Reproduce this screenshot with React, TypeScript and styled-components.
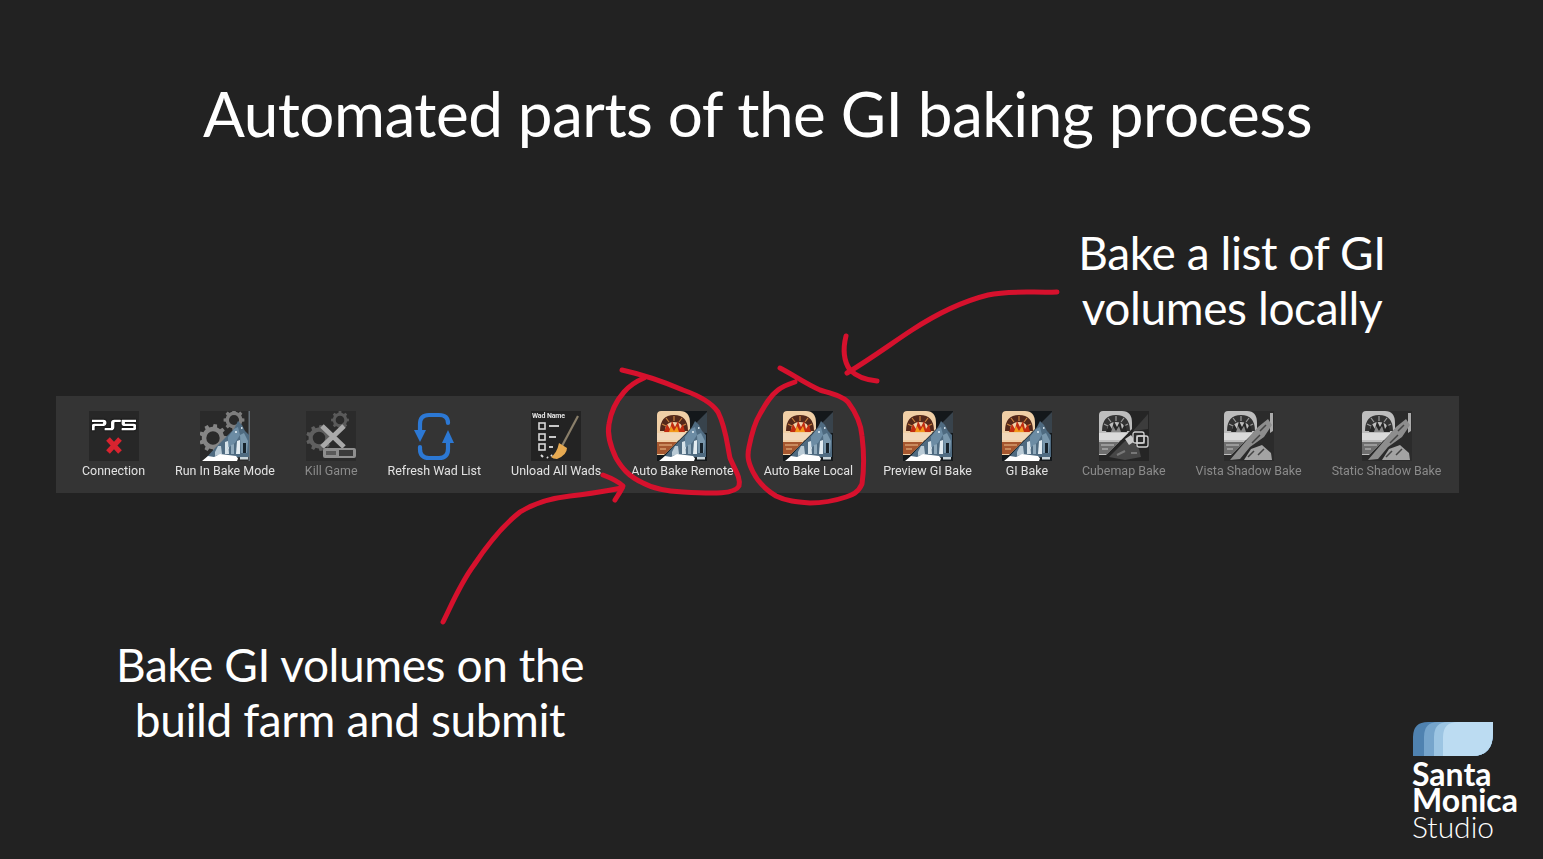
import React from "react";
import styled, { createGlobalStyle } from "styled-components";
import { SiPlaystation5 } from "react-icons/si";

const Global = createGlobalStyle`
  html, body { margin: 0; padding: 0; background: #222222; }
  #root { width: 1543px; height: 859px; overflow: hidden; }
`;

const Slide = styled.main`
  position: relative;
  width: 1543px;
  height: 859px;
  overflow: hidden;
  background: #222222;
  color: #ffffff;
  font-family: Lato, "Liberation Sans", sans-serif;
  display: flex;
  flex-direction: column;
`;

const Title = styled.h1`
  margin: 74px 0 0 0;
  height: 78px;
  padding-right: 28px;
  text-align: center;
  font-size: 62px;
  line-height: 78px;
  font-weight: 400;
  letter-spacing: -0.5px;
  white-space: nowrap;
`;

const Callout = styled.p<{ $width: number }>`
  margin: 0;
  width: ${(p) => p.$width}px;
  text-align: center;
  font-size: 46px;
  line-height: 55px;
  font-weight: 400;
  letter-spacing: -0.4px;
`;

const UpperRow = styled.section`
  display: flex;
  justify-content: flex-end;
  padding: 73px 151px 0 0;
  height: 244px;
  box-sizing: border-box;
`;

const Toolbar = styled.nav`
  margin: 0 0 0 56px;
  width: 1403px;
  height: 97px;
  box-sizing: border-box;
  background: #343434;
  display: flex;
  gap: 30px;
  padding: 15px 0 0 26px;
  font-family: Roboto, "Liberation Sans", sans-serif;
`;

const Tool = styled.div<{ $dim?: boolean }>`
  display: flex;
  flex-direction: column;
  align-items: center;
  gap: 2px;
  color: ${(p) => (p.$dim ? "#8b8b8b" : "#e2e2e2")};
  font-size: 12.45px;
  line-height: 16px;
  white-space: nowrap;
  filter: blur(0.4px);
`;

const IconBox = styled.div`
  width: 50px;
  height: 50px;
  flex: none;
  filter: blur(0.35px);
  svg { display: block; }
`;

const PsTile = styled.div`
  width: 50px;
  height: 50px;
  background: #272727;
  display: flex;
  flex-direction: column;
  align-items: center;
  color: #ffffff;
  svg.logo {
    margin: -8px 0 -10px;
    stroke: #ffffff;
    stroke-width: 0.7px;
    filter: drop-shadow(0 0 1px #000);
  }
`;

const LowerRow = styled.section`
  display: flex;
  justify-content: space-between;
  align-items: flex-start;
  padding: 144px 26px 0 100px;
`;

const Brand = styled.div`
  margin-top: 84px;
  width: 105px;
  display: flex;
  flex-direction: column;
  align-items: flex-start;
`;

const BrandLine = styled.span<{ $light?: boolean }>`
  font-family: Lato, "Liberation Sans", sans-serif;
  font-size: ${(p) => (p.$light ? 30 : 32)}px;
  height: 26px;
  line-height: 26px;
  font-weight: ${(p) => (p.$light ? 300 : 700)};
  letter-spacing: 0;
  color: #ffffff;
  white-space: nowrap;
`;

const BrandMark = styled.svg`
  display: block;
  margin-bottom: 4px;
  filter: blur(0.3px);
`;

const InkLayer = styled.svg`
  position: absolute;
  inset: 0;
  pointer-events: none;
`;

const Ink = styled.path`
  fill: none;
  stroke: #d6112d;
  stroke-width: 5;
  stroke-linecap: round;
  stroke-linejoin: round;
`;

function gearPath(cx: number, cy: number, r: number, teeth = 8) {
  const pts: string[] = [];
  const step = (Math.PI * 2) / teeth;
  for (let i = 0; i < teeth; i++) {
    const a = i * step;
    const at = (rad: number, off: number) =>
      `${(cx + rad * Math.cos(a + off * step)).toFixed(1)} ${(cy + rad * Math.sin(a + off * step)).toFixed(1)}`;
    pts.push(at(r * 0.8, -0.5), at(r * 0.8, -0.28), at(r, -0.18), at(r, 0.18), at(r * 0.8, 0.28));
  }
  const hole = r * 0.48;
  return `M${pts.join(" L")} Z M${cx - hole} ${cy} a${hole} ${hole} 0 1 0 ${hole * 2} 0 a${hole} ${hole} 0 1 0 ${-hole * 2} 0 Z`;
}

const Snow = () => (
  <>
    <path d="M6 47 L16 36 L26 26 L34 18 L38 10 L42 14 L45 20 L49 24 L49 46 Z" fill="#4f6b81" />
    <path d="M28 26 L34 18 L38 16 L40 24 L35 32 L28 37 Z" fill="#6c8ca4" />
    <path d="M40 24 L44 22 L48 30 L47 42 L41 42 Z" fill="#7a98ad" />
    <path d="M15 41 L18 35 L21 35 L22 43 L15 45 Z" fill="#b9cad5" />
    <path d="M25 31 L28 30 L29 43 L25 43 Z" fill="#d6e2e9" />
    <path d="M31 34 L34 33 L34 43 L31 43 Z" fill="#8fa9bb" />
    <path d="M37 30 L40 29 L40 43 L36 43 Z" fill="#e3ecf1" />
    <path d="M43 32 L46 32 L46 42 L43 42 Z" fill="#16222b" />
    <path d="M35 20 h2 v2 h-2 Z M41 16 h1.5 v2 h-1.5 Z M27 36 h2 v2 h-2 Z" fill="#c9d8e2" />
    <path d="M2 50 L8 45 L14 46 L20 43 L36 45 L38 47.5 L37 50 Z" fill="#ffffff" />
    <path d="M40 46 H48 V48.5 H40 Z" fill="#c8d4da" />
  </>
);

const Hearth = ({ grey }: { grey?: boolean }) => (
  <>
    <path
      d="M4 0 H23 Q33 0 33 12 V18 L7 44 H0 V4 Q0 0 4 0 Z"
      fill={grey ? "#bdbdbd" : "#f0cfa6"}
    />
    <path
      d="M3 20 Q3 4 17 4 Q31 4 31 20 L26 20 Q26 11 17 11 Q8 11 8 20 Z"
      fill={grey ? "#333333" : "#54281a"}
    />
    <path d="M5 13 L9 15 M9 7 L12 11 M17 5 V10 M25 7 L22 11 M29 13 L25 15" stroke={grey ? "#9a9a9a" : "#c9803f"} strokeWidth="1.2" />
    <path
      d="M7 21 L10 13 L13 18 L15 10 L18 16 L21 10 L23 18 L26 13 L28 21 Z"
      fill={grey ? "#262626" : "#c22c10"}
    />
    <path d="M12 21 L14 15 L17 20 L20 15 L22 21 Z" fill={grey ? "#888888" : "#f39a1c"} />
    <path d="M0 22 H29 L22 29 H0 Z" fill={grey ? "#dadada" : "#f2d8ba"} />
    <path d="M0 31 H20 L8 43 H0 Z" fill={grey ? "#6e6e6e" : "#a5562e"} />
    <path d="M2 33 H15 V35 H2 Z M3 37 H9 V39 H3 Z" fill={grey ? "#9a9a9a" : "#c98a5c"} />
  </>
);

const BakeIcon = () => (
  <svg width="50" height="50" viewBox="0 0 50 50">
    <path d="M2 0 H50 V50 H0 V2 Z" fill="#14181b" />
    <path d="M50 1 V22 L30 21 Z" fill="#38434c" />
    <Hearth />
    <Snow />
  </svg>
);

const CubeIcon = () => (
  <svg width="50" height="50" viewBox="0 0 50 50">
    <path d="M2 0 H50 V50 H0 V2 Z" fill="#252525" />
    <path d="M49 3 V18 L34 20 Z" fill="#3c3c3c" />
    <Hearth grey />
    <path d="M10 46 L26 30 L34 31 L40 38 L42 46 L26 49 Z" fill="#474747" />
    <path d="M26 28 L32 24 L36 30 L30 34 Z" fill="#c9c9c9" />
    <path d="M18 44 L26 40 M32 42 L38 42" stroke="#777777" strokeWidth="2" />
  </svg>
);

const CubeBadge = styled.svg`
  position: absolute;
  left: 33px;
  top: 20px;
`;

const CubeSlot = styled.div`
  position: relative;
  width: 50px;
  height: 50px;
`;

const CubemapIcon = () => (
  <CubeSlot>
    <CubeIcon />
    <CubeBadge width="17" height="17" viewBox="0 0 17 17">
      <g fill="none" stroke="#d0d0d0" strokeWidth="1.3">
        <rect x="1" y="1" width="11" height="11" rx="2" fill="#2a2a2a" />
        <rect x="5" y="5" width="11" height="11" rx="2" />
        <rect x="5" y="5" width="7" height="7" />
      </g>
    </CubeBadge>
  </CubeSlot>
);

const ShadowIcon = () => (
  <svg width="50" height="50" viewBox="0 0 50 50">
    <path d="M2 0 H50 V50 H0 V2 Z" fill="#2b2b2b" />
    <Hearth grey />
    <path d="M46 2 H49 V20 L46 22 Z" fill="#aaaaaa" />
    <path d="M6 49 L22 30 L34 16 L44 8 L48 14 L40 26 L26 36 L16 48 Z" fill="#8d8d8d" />
    <path d="M20 49 L27 38 L38 34 L47 42 L48 49 Z" fill="#a3a3a3" />
    <path d="M24 46 L30 40 M34 44 L40 38 M28 32 L36 24 M36 20 L42 14" stroke="#444444" strokeWidth="1.5" />
  </svg>
);

const RunIcon = () => (
  <svg width="50" height="50" viewBox="0 0 50 50">
    <rect width="50" height="50" fill="#2a2a2a" />
    <path d={gearPath(13, 27, 14, 9)} fill="#858585" fillRule="evenodd" />
    <path d={gearPath(34, 9, 10.5, 8)} fill="#7d7d7d" fillRule="evenodd" />
    <path d="M48.5 0 H50 V50 H48.5 Z" fill="#667078" />
    <Snow />
  </svg>
);

const KillIcon = () => (
  <svg width="50" height="50" viewBox="0 0 50 50">
    <rect width="50" height="50" fill="#2b2b2b" />
    <path d={gearPath(13, 27, 13, 9)} fill="#5f5f5f" fillRule="evenodd" />
    <path d={gearPath(34, 9, 9, 8)} fill="#5a5a5a" fillRule="evenodd" />
    <path d="M16 15 L38 36 M38 15 L16 36" stroke="#a9a9a9" strokeWidth="5" />
    <rect x="17" y="37" width="33" height="10" rx="2" fill="#8f8f8f" />
    <rect x="20" y="40" width="10" height="4" fill="#5a5a5a" />
    <path d="M33 39 H47 V45 H33 Z" fill="#3a3a3a" />
  </svg>
);

const RefreshIcon = () => (
  <svg width="50" height="50" viewBox="0 0 50 50">
    <g fill="none" stroke="#2c78d4" strokeWidth="4.2" strokeLinecap="round">
      <path d="M11 20 V13 Q11 4 20 4 H30 Q39 4 39 12" />
      <path d="M39 30 V38 Q39 47 30 47 H20 Q11 47 11 38 V36" />
    </g>
    <path d="M5 19 H17 L11 31 Z" fill="#2c78d4" />
    <path d="M33 32 H45 L39 19 Z" fill="#2c78d4" />
  </svg>
);

const ListGlyph = styled.text`
  font-family: Roboto, sans-serif;
  font-size: 7px;
  font-weight: 700;
  fill: #e4e4e4;
`;

const WadsIcon = () => (
  <svg width="50" height="50" viewBox="0 0 50 50">
    <rect width="50" height="50" fill="#232323" />
    <ListGlyph x="1" y="7" textLength="33">Wad Name</ListGlyph>
    <g fill="none" stroke="#d8d8d8" strokeWidth="1.6">
      <rect x="8" y="12" width="6" height="6" />
      <rect x="8" y="23" width="6" height="6" />
      <rect x="8" y="33" width="6" height="6" />
    </g>
    <path d="M18 15 H28 M18 26 H25 M18 36 H22" stroke="#c9c9c9" strokeWidth="2" />
    <path d="M47 5 L31 35" stroke="#8a7f6a" strokeWidth="2.2" />
    <path d="M28 32 L36 37 Q36 44 26 48 Q22 48 20 46 Q26 42 28 32 Z" fill="#e6a951" />
    <path d="M10 44 l2 2 M16 46 l1 1 M20 44 l1 1" stroke="#dddddd" strokeWidth="2" />
  </svg>
);

const XMark = () => (
  <svg width="18" height="17" viewBox="0 0 18 17">
    <path d="M3 2 L15 15 M15 2 L3 15" stroke="#d9232f" strokeWidth="5" />
  </svg>
);

const PsIcon = () => (
  <PsTile>
    <SiPlaystation5 className="logo" size={44} />
    <XMark />
  </PsTile>
);

type ToolDef = { label: string; icon: React.ReactNode; dim?: boolean };

const tools: ToolDef[] = [
  { label: "Connection", icon: <PsIcon /> },
  { label: "Run In Bake Mode", icon: <RunIcon /> },
  { label: "Kill Game", icon: <KillIcon />, dim: true },
  { label: "Refresh Wad List", icon: <RefreshIcon /> },
  { label: "Unload All Wads", icon: <WadsIcon /> },
  { label: "Auto Bake Remote", icon: <BakeIcon /> },
  { label: "Auto Bake Local", icon: <BakeIcon /> },
  { label: "Preview GI Bake", icon: <BakeIcon /> },
  { label: "GI Bake", icon: <BakeIcon /> },
  { label: "Cubemap Bake", icon: <CubemapIcon />, dim: true },
  { label: "Vista Shadow Bake", icon: <ShadowIcon />, dim: true },
  { label: "Static Shadow Bake", icon: <ShadowIcon />, dim: true },
];

const LogoMark = () => (
  <BrandMark width="82" height="36" viewBox="0 0 82 36">
    <path d="M16 1 H81 V12 Q81 35 60 35 H1 V16 Q1 1 16 1 Z" fill="#4f82b0" />
    <path d="M26 1 H81 V12 Q81 35 60 35 H12 V16 Q12 1 26 1 Z" fill="#76a5cc" />
    <path d="M36 1 H81 V12 Q81 35 60 35 H22 V16 Q22 1 36 1 Z" fill="#9cc5e3" />
    <path d="M46 1 H81 V12 Q81 35 60 35 H31 V16 Q31 1 46 1 Z" fill="#bcdcf2" />
  </BrandMark>
);

export default function App() {
  return (
    <Slide>
      <Global />
      <Title>Automated parts of the GI baking process</Title>
      <UpperRow>
        <Callout $width={320}>
          Bake a list of GI
          <br />
          volumes locally
        </Callout>
      </UpperRow>
      <Toolbar>
        {tools.map((t) => (
          <Tool key={t.label} $dim={t.dim}>
            <IconBox>{t.icon}</IconBox>
            {t.label}
          </Tool>
        ))}
      </Toolbar>
      <LowerRow>
        <Callout $width={500}>
          Bake GI volumes on the
          <br />
          build farm and submit
        </Callout>
        <Brand>
          <LogoMark />
          <BrandLine>Santa</BrandLine>
          <BrandLine>Monica</BrandLine>
          <BrandLine $light>Studio</BrandLine>
        </Brand>
      </LowerRow>
      <InkLayer width="1543" height="859" viewBox="0 0 1543 859">
        <Ink d="M622 370 C640 374 662 381 683 390 C700 396 712 403 718 412 C726 428 727 444 730 458 C735 470 741 478 739 486 C735 494 715 494 683 492 C664 491 652 488 643 483 C628 476 622 468 616 458 C610 445 607 435 609 424 C611 411 617 400 624 392 C630 385 637 381 644 378" />
        <Ink d="M780 368 C792 374 806 384 820 390 C833 394 842 396 848 402 C857 414 861 424 862 436 C864 452 864 470 862 484 C858 493 852 495 846 497 C834 501 822 503 810 503 C797 502 786 501 776 496 C766 490 758 482 753 472 C748 462 747 456 749 447 C752 432 755 422 760 414 C765 405 770 396 778 390 C783 386 789 384 795 382" />
        <Ink d="M443 622 C452 604 460 584 474 565 C488 544 502 526 520 512 C536 502 552 498 570 496 C590 494 606 491 622 488" />
        <Ink d="M603 475 C611 478 618 481 623 486 C621 491 618 495 615 500" />
        <Ink d="M1057 292 C1035 293 1010 290 988 295 C960 302 935 315 912 330 C892 343 872 358 847 373" />
        <Ink d="M846 336 C843 348 843 360 850 370 C856 376 866 380 877 381" />
      </InkLayer>
    </Slide>
  );
}
